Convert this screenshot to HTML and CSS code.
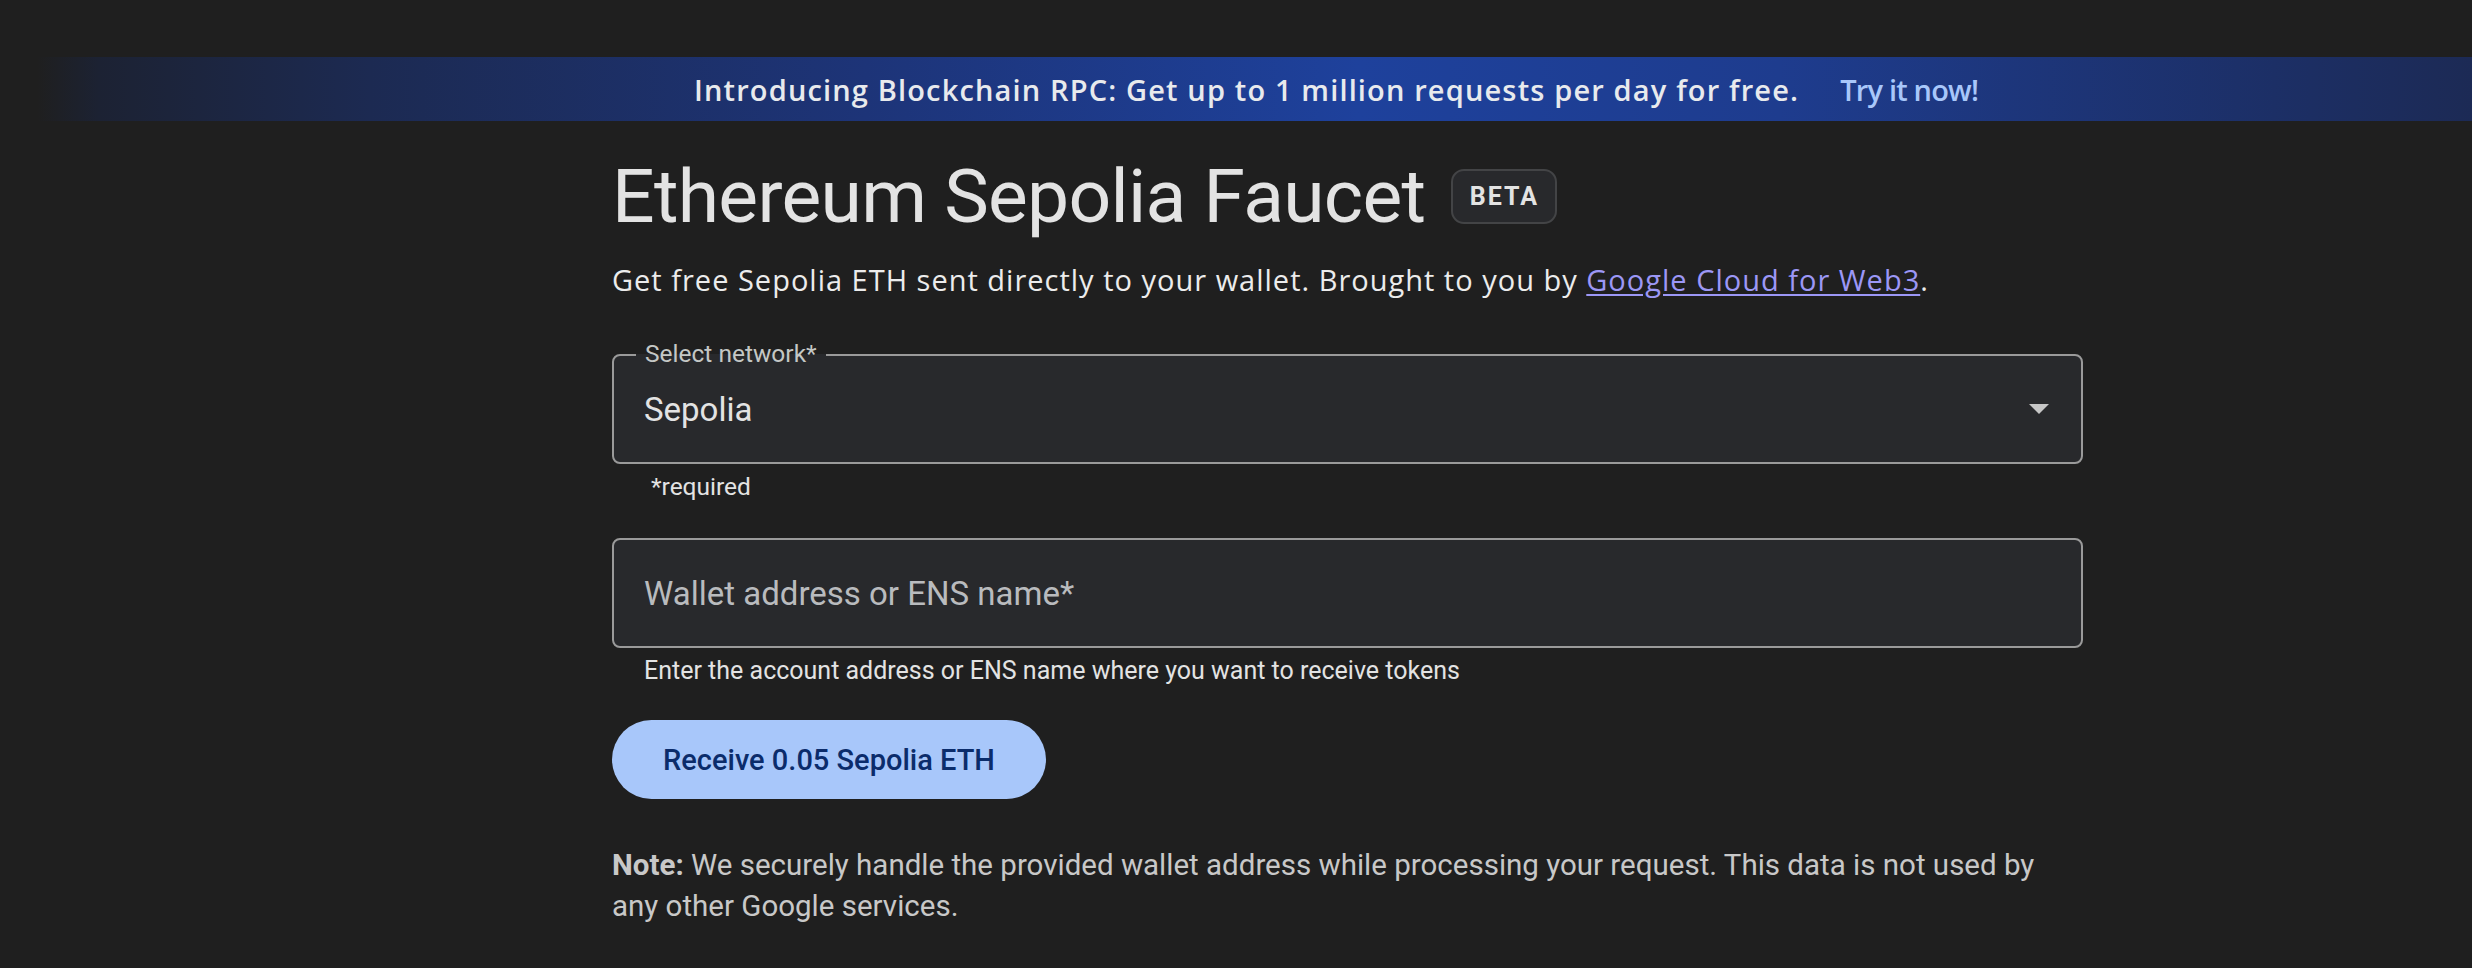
FILE: index.html
```html
<!DOCTYPE html>
<html lang="en">
<head>
<meta charset="utf-8">
<title>Ethereum Sepolia Faucet</title>
<link rel="stylesheet" href="styles.css">
</head>
<body>
<div class="banner">
  <span class="banner-text">Introducing Blockchain RPC: Get up to 1 million requests per day for free.</span>
  <a class="banner-link" href="#">Try it now!</a>
</div>
<main class="content">
  <div class="title-row">
    <h1 class="title">Ethereum Sepolia Faucet</h1>
    <span class="badge">BETA</span>
  </div>
  <p class="subtitle">Get free Sepolia ETH sent directly to your wallet. Brought to you by <a class="link" href="#">Google Cloud for Web3</a>.</p>

  <div class="field select-field">
    <span class="float-label">Select network*</span>
    <span class="field-value">Sepolia</span>
    <svg class="arrow" width="20" height="10" viewBox="0 0 20 10"><path d="M0 0 L20 0 L10 10 Z" fill="#c6c6c6"/></svg>
  </div>
  <div class="hint hint-required">*required</div>

  <div class="field input-field">
    <span class="placeholder">Wallet address or ENS name*</span>
  </div>
  <div class="hint hint-help">Enter the account address or ENS name where you want to receive tokens</div>

  <button class="cta">Receive 0.05 Sepolia ETH</button>

  <p class="note"><b class="note-label">Note:</b> <span class="note-text">We securely handle the provided wallet address while processing your request. This data is not used by any other Google services.</span></p>
</main>
</body>
</html>
```

FILE: styles.css
```css
html, body {
  margin: 0;
  padding: 0;
  background: #1f1f1f;
  font-family: Roboto, "Open Sans", "Liberation Sans", sans-serif;
  color: #e3e3e3;
}

.banner {
  margin-top: 57px;
  height: 64px;
  display: flex;
  align-items: center;
  justify-content: flex-start;
  padding-left: 694px;
  box-sizing: border-box;
  background: linear-gradient(90deg, #1f1f1f 0%, #1f1f1f 1.5%, #1c2233 4%, #1c2a52 15%, #1d3478 35%, #1e419c 55%, #1e3c8e 72%, #1c2f66 92%, #1c2a55 100%);
}

.banner-text {
  font-family: "Open Sans", Roboto, sans-serif;
  font-size: 29px;
  font-weight: 600;
  letter-spacing: 1.15px;
  color: #e8eaed;
}

.banner-link {
  margin-left: 41px;
  font-family: "Open Sans", Roboto, sans-serif;
  font-size: 29px;
  font-weight: 600;
  letter-spacing: -0.8px;
  color: #a8c7fa;
  text-decoration: none;
}

.content {
  margin-left: 612px;
  width: 1471px;
  display: flex;
  flex-direction: column;
  align-items: flex-start;
}

.title-row {
  margin-top: 31px;
  display: flex;
  align-items: center;
  height: 88px;
}

.title {
  margin: 0;
  font-size: 75px;
  font-weight: 400;
  line-height: 88px;
  letter-spacing: -0.7px;
  color: #e3e3e3;
}

.badge {
  margin-left: 26px;
  width: 106px;
  height: 55px;
  box-sizing: border-box;
  border: 2px solid #434446;
  border-radius: 13px;
  background: #28292c;
  display: flex;
  align-items: center;
  justify-content: center;
  font-size: 25px;
  font-weight: 700;
  letter-spacing: 2px;
  color: #e3e3e3;
}

.subtitle {
  margin: 20px 0 0 0;
  font-family: "Open Sans", Roboto, sans-serif;
  font-size: 29px;
  line-height: 40px;
  letter-spacing: 1px;
  color: #ececec;
}

.link {
  color: #9c97f6;
  text-decoration: underline;
  text-underline-offset: 3px;
}

.field {
  position: relative;
  width: 1471px;
  height: 110px;
  box-sizing: border-box;
  border: 2px solid #9a9a9a;
  border-radius: 8px;
  background: #28292c;
  display: flex;
  align-items: center;
  padding: 0 30px;
}

.select-field {
  margin-top: 54px;
}

.float-label {
  position: absolute;
  left: 22px;
  top: -16px;
  padding: 0 9px;
  background: linear-gradient(#1f1f1f 50%, #28292c 50%);
  font-size: 24.5px;
  line-height: 28px;
  color: #c4c7c5;
}

.field-value {
  flex: 1;
  font-size: 33px;
  color: #e3e3e3;
}

.arrow {
  margin-right: 2px;
}

.placeholder {
  font-size: 33px;
  color: #b9bbbe;
}

.hint {
  line-height: 30px;
  color: #e3e3e3;
}

.hint-required {
  margin: 8px 0 0 39px;
  font-size: 24.5px;
}

.input-field {
  margin-top: 36px;
}

.hint-help {
  margin: 8px 0 0 32px;
  font-size: 25px;
}

.cta {
  margin-top: 34px;
  height: 79px;
  width: 434px;
  border: none;
  border-radius: 40px;
  background: #a8c7fa;
  color: #0b2c6b;
  font-family: inherit;
  font-size: 29px;
  font-weight: 500;
  cursor: pointer;
}

.note {
  margin: 46px 0 0 0;
  font-size: 29.5px;
  line-height: 41px;
  color: #c8c8c8;
}

.note-label {
  font-weight: 700;
}
```
